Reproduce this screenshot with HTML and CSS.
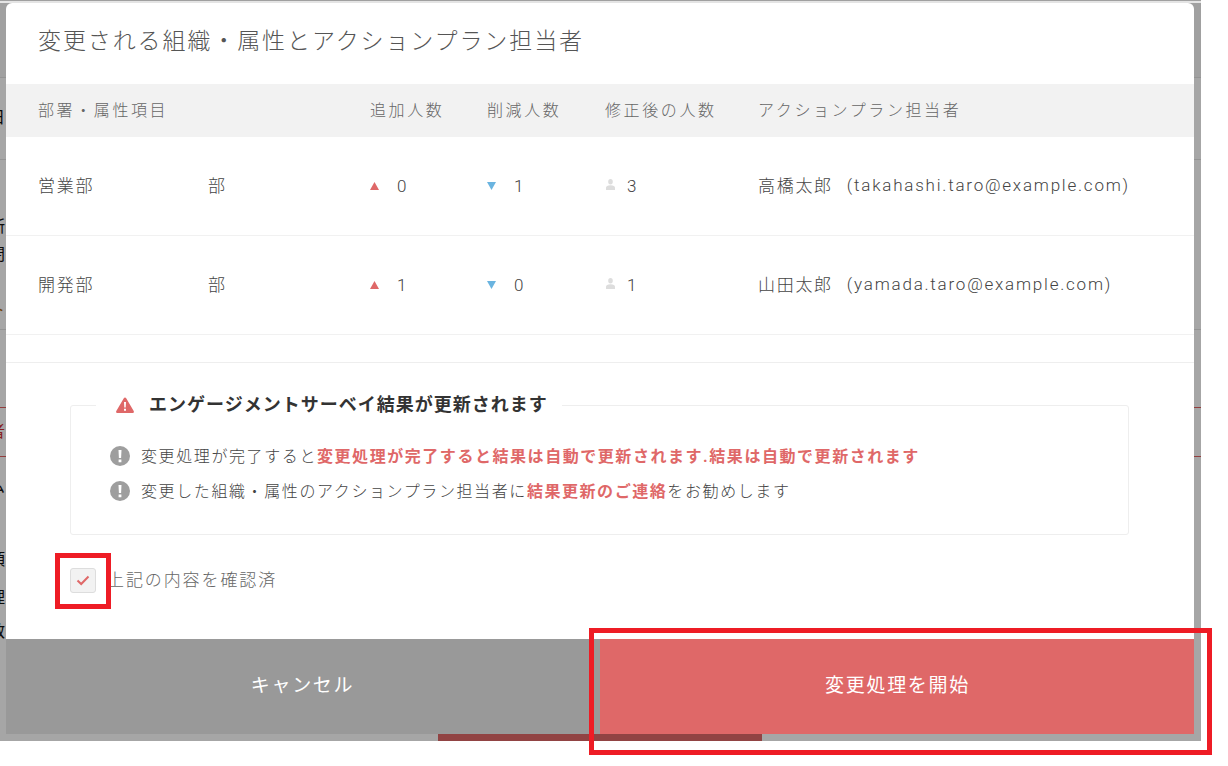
FILE: index.html
```html
<!DOCTYPE html>
<html lang="ja">
<head>
<meta charset="utf-8">
<title>変更される組織・属性とアクションプラン担当者</title>
<link rel="stylesheet" href="styles.css">
</head>
<body>
<div class="stage">
  <div class="behind">
    <div class="b b-head"></div>
    <div class="b b-a"><span>日</span></div>
    <div class="b b-b"><span>所</span></div>
    <div class="b b-c"><span>閉</span></div>
    <div class="b b-d"><span class="orange">ト</span></div>
    <div class="b b-e"><span>S</span></div>
    <div class="b b-f"><span class="red">者</span></div>
    <div class="b b-g"><span>ム</span></div>
    <div class="b b-h"><span>頂</span></div>
    <div class="b b-i"><span>理</span></div>
    <div class="b b-j"><span>数</span></div>
    <div class="b-bar"></div>
  </div>
  <div class="veil"></div>
  <div class="topband"></div>

  <section class="modal">
    <h1 class="title">変更される組織・属性とアクションプラン担当者</h1>

    <div class="row head">
      <div class="t">部署・属性項目</div><div></div>
      <div class="t">追加人数</div><div class="t">削減人数</div><div class="t">修正後の人数</div><div class="t">アクションプラン担当者</div>
    </div>
    <div class="row">
      <div class="t">営業部</div><div class="t">部</div>
      <div class="num"><svg class="mark" viewBox="0 0 9 8"><path class="up" d="M4.500 0 9 8H0z"/></svg><b>0</b></div>
      <div class="num"><svg class="mark" viewBox="0 0 9 8"><path class="down" d="M0 0h9L4.500 8z"/></svg><b>1</b></div>
      <div class="num person"><svg class="mark" viewBox="0 0 9 11"><path class="man" d="M4.500 0a2.300 2.700 0 0 1 0 5.400 2.300 2.700 0 0 1 0-5.400zM0 11V8.800C0 7.200 1.500 6.200 4.500 6.200S9 7.200 9 8.800V11z"/></svg><b>3</b></div>
      <div class="who"><span class="t">高橋太郎</span><span class="mail">(takahashi.taro@example.com)</span></div>
    </div>
    <div class="row">
      <div class="t">開発部</div><div class="t">部</div>
      <div class="num"><svg class="mark" viewBox="0 0 9 8"><path class="up" d="M4.500 0 9 8H0z"/></svg><b>1</b></div>
      <div class="num"><svg class="mark" viewBox="0 0 9 8"><path class="down" d="M0 0h9L4.500 8z"/></svg><b>0</b></div>
      <div class="num person"><svg class="mark" viewBox="0 0 9 11"><path class="man" d="M4.500 0a2.300 2.700 0 0 1 0 5.400 2.300 2.700 0 0 1 0-5.400zM0 11V8.800C0 7.200 1.500 6.200 4.500 6.200S9 7.200 9 8.800V11z"/></svg><b>1</b></div>
      <div class="who"><span class="t">山田太郎</span><span class="mail">(yamada.taro@example.com)</span></div>
    </div>
    <div class="spacer"></div>

    <fieldset class="alert">
      <legend class="alert-title">
        <svg class="warn" viewBox="0 0 18 16"><path class="warn-bg" d="M9 0.500c.5 0 .9.300 1.200.800l7.500 12.800c.5.800-.1 1.900-1.100 1.900H1.400c-1 0-1.600-1.100-1.100-1.900L7.800 1.300C8.100.800 8.500.500 9 .500z"/><path class="warn-fg" d="M8 5h2l-.3 5.500H8.300zM8 11.800h2v2H8z"/></svg>
        <span>エンゲージメントサーベイ結果が更新されます</span>
      </legend>
      <ul class="notes">
        <li><svg class="info" viewBox="0 0 20 20"><circle class="info-bg" cx="10" cy="10" r="10"/><path class="info-fg" d="M8.500 4h3l-.4 8H8.900zM8.600 13.500h2.800v2.800H8.600z"/></svg><span>変更処理が完了すると<strong>変更処理が完了すると結果は自動で更新されます.結果は自動で更新されます</strong></span></li>
        <li><svg class="info" viewBox="0 0 20 20"><circle class="info-bg" cx="10" cy="10" r="10"/><path class="info-fg" d="M8.500 4h3l-.4 8H8.900zM8.600 13.500h2.800v2.800H8.600z"/></svg><span>変更した組織・属性のアクションプラン担当者に<strong>結果更新のご連絡</strong>をお勧めします</span></li>
      </ul>
    </fieldset>

    <div class="confirm">
      <span class="box"><svg class="check" viewBox="0 0 14 11"><path d="M1.500 5.500 5.200 9 12.500 1.500"/></svg></span>
      <span class="confirm-label">上記の内容を確認済</span>
    </div>

    <div class="actions">
      <button class="btn cancel" type="button">キャンセル</button>
      <button class="btn go" type="button">変更処理を開始</button>
    </div>
  </section>

  <div class="callout small"></div>
  <div class="callout large"></div>
</div>
</body>
</html>
```
FILE: styles.css
```css
* { box-sizing: border-box; }
html, body { margin: 0; padding: 0; background: #fff; }
body {
  font-family: Roboto, "Noto Sans CJK JP", sans-serif;
  font-weight: 300;
  color: #444;
  width: 1228px;
  height: 766px;
  overflow: hidden;
}
.stage { position: relative; width: 1201px; height: 741px; }

/* page behind the dialog */
.behind { height: 100%; background: #fff; overflow: hidden; }
.b { color: #111; font-size: 16px; line-height: 20px; font-weight: 400; border-bottom: 0; }
.b span { display: block; margin-left: -11px; }
.b-head { height: 78px; background: #f6f6f6; border-bottom: 1px solid #e4e4e4; }
.b-a { height: 82px; padding-top: 30px; border-bottom: 1px solid #e4e4e4; }
.b-b { height: 80px; padding-top: 57px; }
.b-c { height: 38px; padding-top: 5px; }
.b-d { height: 52px; padding-top: 22px; border-bottom: 1px solid #e4e4e4; }
.b-e { height: 78px; padding-top: 10px; border-bottom: 1px solid #e06060; }
.b-f { height: 49px; padding-top: 14px; border-bottom: 1px solid #e06060; }
.b-g { height: 93px; padding-top: 20px; }
.b-h { height: 28px; }
.b-i { height: 36px; padding-top: 10px; }
.b-j { height: 30px; padding-top: 8px; }
.orange { color: #b06a10; }
.red { color: #d03030; }
.b-bar { position: absolute; left: 438px; top: 700px; width: 324px; height: 41px; background: #df6868; }
.veil { position: absolute; inset: 0; background: rgba(0, 0, 0, .35); }
.topband { position: absolute; left: 0; right: 0; top: 1px; height: 2px; background: #e4e4e4; }

/* dialog */
.modal {
  position: absolute;
  left: 6px;
  top: 3px;
  width: 1188px;
  height: 731px;
  background: #fff;
  border-radius: 6px 6px 0 0;
  display: flex;
  flex-direction: column;
  overflow: hidden;
}
.title {
  margin: 0;
  height: 81px;
  padding: 0 32px 9px;
  display: flex;
  align-items: center;
  font-size: 23px;
  font-weight: 300;
  letter-spacing: 1.900px;
  color: #555;
  flex: none;
}
.row {
  display: grid;
  grid-template-columns: 170px 162px 117px 118px 153px 1fr;
  align-items: center;
  height: 99px;
  padding-left: 32px;
  font-size: 17px;
  letter-spacing: 1.700px;
  border-bottom: 1px solid #f1f1f1;
  flex: none;
}
.t { position: relative; top: -2px; }
.row.head {
  height: 53px;
  background: #f2f2f2;
  border-bottom: 0;
  color: #666;
  font-size: 16px;
  letter-spacing: 2.600px;
}
.num { display: flex; align-items: center; }
.num b { font-weight: 300; margin-left: 18px; }
.num.person b { margin-left: 12px; }
.mark { width: 9px; height: 8px; flex: none; }
.person .mark { height: 11px; margin: -3px 0 0 1px; }
.up { fill: #df6868; }
.down { fill: #6ab4e0; }
.man { fill: #ddd; }
.who { white-space: nowrap; display: flex; align-items: center; }
.mail { margin-left: 14px; letter-spacing: 1.780px; position: relative; top: -1px; }
.spacer { height: 28px; border-bottom: 1px solid #eee; flex: none; }

.alert {
  margin: 29px 65px 0 64px;
  padding: 0 0 0 39px;
  height: 143px;
  border: 1px solid #eee;
  border-radius: 3px;
  min-width: 0;
  flex: none;
}
.alert-title {
  margin-left: -14px;
  padding: 0 14px 0 20px;
  display: flex;
  align-items: center;
  gap: 15px;
  font-size: 18px;
  font-weight: 700;
  letter-spacing: 1px;
  color: #333;
  line-height: 26px;
}
.warn { width: 18px; height: 16px; flex: none; }
.warn-bg { fill: #df6868; }
.warn-fg { fill: #fff; }
.notes { list-style: none; margin: 0; padding: 19px 0 0; }
.notes li {
  display: flex;
  align-items: center;
  gap: 11px;
  height: 35px;
  font-size: 16px;
  letter-spacing: 1.600px;
}
.notes strong { color: #df6868; font-weight: 700; letter-spacing: 1.550px; }
.info { width: 20px; height: 20px; flex: none; position: relative; top: 1px; }
.info-bg { fill: #9e9e9e; }
.info-fg { fill: #fff; }

.confirm {
  display: flex;
  align-items: center;
  margin: 32px 0 0 64px;
  height: 26px;
  flex: none;
}
.box {
  width: 26px;
  height: 25px;
  flex: none;
  display: flex;
  align-items: center;
  justify-content: center;
  background: #f2f2f2;
  border: 1px solid #ddd;
  border-radius: 3px;
}
.check { width: 14px; height: 11px; fill: none; stroke: #df6868; stroke-width: 2; }
.confirm-label { margin: -3px 0 0 11px; font-size: 17px; letter-spacing: 1.900px; color: #666; }

.actions { margin: auto -1px 0; display: flex; height: 95px; flex: none; }
.btn {
  border: 0;
  font: inherit;
  font-size: 19px;
  font-weight: 400;
  letter-spacing: 1.700px;
  color: #fff;
  padding: 0 0 6px;
}
.cancel { width: 595px; background: #999; }
.go { flex: 1; background: #df6868; }

/* annotations laid over the screenshot */
.callout { position: absolute; border: 5px solid #ee1c25; }
.callout.small { left: 55px; top: 553px; width: 56px; height: 56px; }
.callout.large { left: 589px; top: 628px; width: 623px; height: 127px; }
```
